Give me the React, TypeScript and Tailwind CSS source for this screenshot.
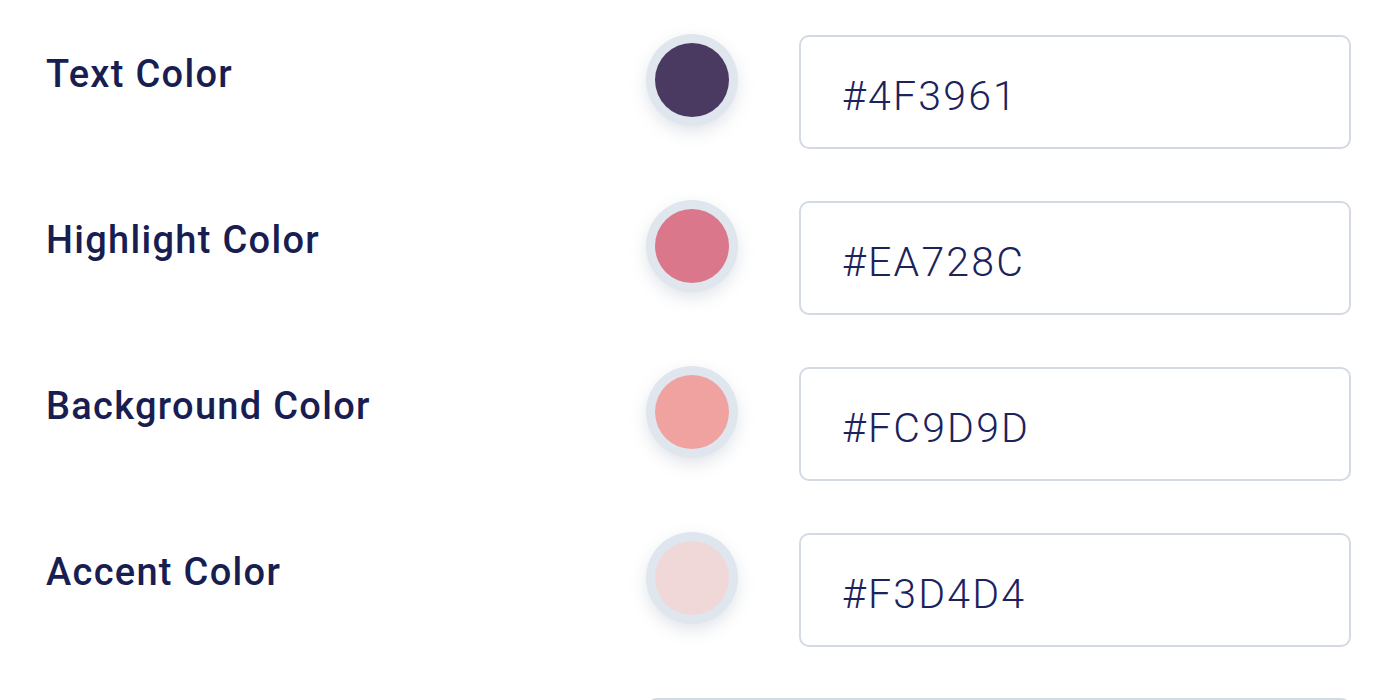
const colors = [
  { label: 'Text Color', hex: '#4F3961', swatch: 'bg-[#4a3961]' },
  { label: 'Highlight Color', hex: '#EA728C', swatch: 'bg-[#db778b]' },
  { label: 'Background Color', hex: '#FC9D9D', swatch: 'bg-[#f0a2a0]' },
  { label: 'Accent Color', hex: '#F3D4D4', swatch: 'bg-[#f0d7d8]' },
];

function ColorRow({ label, hex, swatch }: { label: string; hex: string; swatch: string }) {
  return (
    <div className="flex items-start">
      <div className="w-[600px] shrink-0 pt-[17px] text-[38px] font-medium leading-[46px] tracking-[1.3px] text-[#181d52]">
        {label}
      </div>
      <div className="flex h-[92px] w-[92px] shrink-0 items-center justify-center rounded-full bg-[#dfe6ee] shadow-[0_6px_16px_rgba(140,150,170,0.25)]">
        <div className={`h-[74px] w-[74px] rounded-full ${swatch}`} />
      </div>
      <div className="ml-[61px] mt-[1px] flex h-[114px] w-[552px] shrink-0 items-center rounded-[10px] border-2 border-[#d4dae3] bg-white pl-[41px] pt-[10px]">
        <span className="text-[41px] font-light tracking-[2.2px] text-[#1c225c]">{hex}</span>
      </div>
    </div>
  );
}

export default function App() {
  return (
    <div
      className="h-[700px] w-[1400px] overflow-hidden bg-white pl-[46px] pt-[34px]"
      style={{ fontFamily: 'Roboto, "Open Sans", sans-serif' }}
    >
      <div className="flex flex-col gap-[51px]">
        {colors.map((c) => (
          <ColorRow key={c.label} {...c} />
        ))}
        {/* Next field, cut off by the viewport */}
        <div className="flex items-start">
          <div className="w-[601px] shrink-0" />
          <div className="h-[114px] w-[704px] shrink-0 rounded-[10px] border-2 border-[#d4dae3] bg-white" />
        </div>
      </div>
    </div>
  );
}
